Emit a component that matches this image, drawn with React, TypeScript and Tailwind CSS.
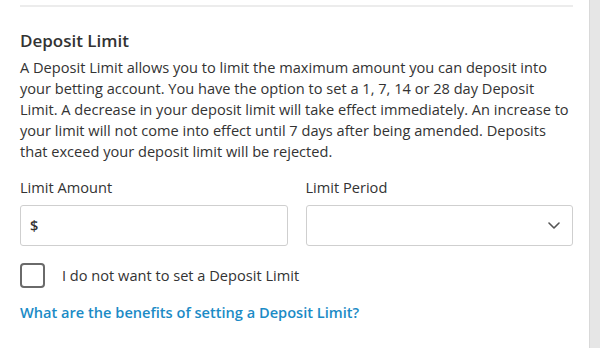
const App = () => {
  return (
    <div className="flex h-[348px] w-[600px] bg-white text-[#333333]" style={{ fontFamily: '"Open Sans", sans-serif' }}>
      <div className="flex-1 pl-5 pr-4">
        <div className="mt-[5px] h-[2px] bg-[#ececec]" />

        <h3 className="mt-[23px] text-[17px] font-semibold leading-[22px]">Deposit Limit</h3>
        <p className="mt-[5px] text-[14.6px] leading-[21px]">
          A Deposit Limit allows you to limit the maximum amount you can deposit into your betting account. You have
          the option to set a 1, 7, 14 or 28 day Deposit Limit. A decrease in your deposit limit will take effect
          immediately. An increase to your limit will not come into effect until 7 days after being amended. Deposits
          that exceed your deposit limit will be rejected.
        </p>

        <div className="mt-[15px] grid grid-cols-2 gap-x-[18px]">
          <div>
            <label className="block text-[14.6px] leading-[21px]">Limit Amount</label>
            <div className="mt-[7px] flex h-[41px] items-center rounded-[3px] border-[1.5px] border-[#cfcfcf] px-[9px]">
              <span className="text-[14.6px] font-semibold">$</span>
            </div>
          </div>
          <div>
            <label className="block text-[14.6px] leading-[21px]">Limit Period</label>
            <div className="mt-[7px] flex h-[41px] items-center justify-end rounded-[3px] border-[1.5px] border-[#cfcfcf] pr-[12px]">
              <svg width="12" height="7" viewBox="0 0 12 7" fill="none">
                <path d="M1 1l5 5 5-5" stroke="#555555" strokeWidth="1.6" strokeLinecap="round" strokeLinejoin="round" />
              </svg>
            </div>
          </div>
        </div>

        <div className="mt-[17px] flex items-center gap-[17px]">
          <div className="h-[25px] w-[25px] rounded-[4px] border-2 border-[#6a6a6a]" />
          <span className="text-[14.6px] leading-[21px]">I do not want to set a Deposit Limit</span>
        </div>

        <a className="mt-[14px] block text-[14.6px] font-semibold leading-[21px] text-[#1b8bc6]">
          What are the benefits of setting a Deposit Limit?
        </a>
      </div>
      <div className="w-[11px] border-l border-[#d9d9d9] bg-[#e6e6e6]" />
    </div>
  );
};

export default App;
